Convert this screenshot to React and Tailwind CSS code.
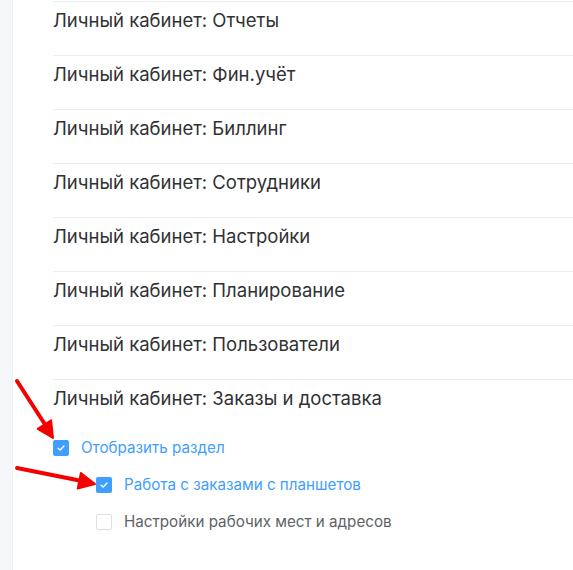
import React from "react";

const rows = [
  "Личный кабинет: Отчеты",
  "Личный кабинет: Фин.учёт",
  "Личный кабинет: Биллинг",
  "Личный кабинет: Сотрудники",
  "Личный кабинет: Настройки",
  "Личный кабинет: Планирование",
  "Личный кабинет: Пользователи",
  "Личный кабинет: Заказы и доставка",
];

function Box({ checked }) {
  return checked ? (
    <span className="flex h-[16px] w-[16px] shrink-0 items-center justify-center rounded-[2px] bg-[#409eff]">
      <svg width="10" height="8" viewBox="0 0 10 8" fill="none">
        <path d="M2 4.2 L4.2 6 L8 2" stroke="white" strokeWidth="1.3" strokeLinecap="round" strokeLinejoin="round" />
      </svg>
    </span>
  ) : (
    <span className="h-[16px] w-[16px] shrink-0 rounded-[2px] border border-[#dcdfe6] bg-white" />
  );
}

export default function App() {
  return (
    <div className="relative flex h-[570px] w-[573px] overflow-hidden bg-white" style={{ fontFamily: "Inter, 'Liberation Sans', sans-serif" }}>
      <div className="w-[13px] shrink-0 border-r border-[#eef0f4] bg-[#f5f7fa]" />
      <div className="flex-1 pl-[40px] pt-[1px]">
        {rows.map((r) => (
          <div key={r} className="h-[54px] border-t border-[#ebeef5] pt-[7px] text-[18.5px] leading-[22px] text-[#303133]">
            {r}
          </div>
        ))}
        <div className="mt-[7px] flex flex-col gap-[21px] text-[15.2px] leading-[16px]">
          <div className="flex items-center gap-[12px] text-[#409eff]">
            <Box checked />
            <span>Отобразить раздел</span>
          </div>
          <div className="flex items-center gap-[12px] pl-[43px] text-[#409eff]">
            <Box checked />
            <span>Работа с заказами с планшетов</span>
          </div>
          <div className="flex items-center gap-[12px] pl-[43px] text-[#606266]">
            <Box />
            <span>Настройки рабочих мест и адресов</span>
          </div>
        </div>
      </div>
      <svg className="pointer-events-none absolute left-0 top-0" width="573" height="570">
        <line x1="17" y1="381" x2="46" y2="426" stroke="#f40000" strokeWidth="4" strokeLinecap="round" />
        <polygon points="53,438 37.7,428.9 51.1,420.3" fill="#f40000" stroke="#f40000" strokeWidth="2" strokeLinejoin="round" />
        <line x1="17" y1="468" x2="82" y2="481" stroke="#f40000" strokeWidth="4" strokeLinecap="round" />
        <polygon points="95,484 77.7,488.6 80.9,473" fill="#f40000" stroke="#f40000" strokeWidth="2" strokeLinejoin="round" />
      </svg>
    </div>
  );
}
